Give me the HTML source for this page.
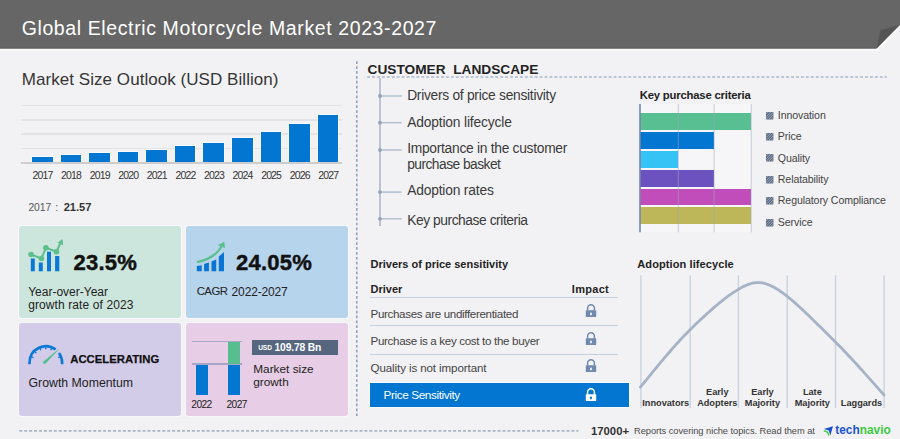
<!DOCTYPE html>
<html><head><meta charset="utf-8"><title>Global Electric Motorcycle Market 2023-2027</title>
<style>
html,body{margin:0;padding:0;}
body{width:900px;height:439px;overflow:hidden;background:#f2f2f4;position:relative;font-family:"Liberation Sans", sans-serif;}
.t{position:absolute;white-space:pre;line-height:1;}
.r{position:absolute;}
.abs{position:absolute;overflow:visible;}
</style></head><body>
<svg class="abs" width="900" height="60" style="left:0;top:0">
<polygon points="0,48.5 876.5,48.5 900,25 900,27.5 878.5,50.8 0,50.8" fill="#fafafb"/>
<polygon points="0,0 900,0 900,25 876.5,48.5 0,48.5" fill="#666666"/>
<rect x="0" y="47.5" width="876" height="1" fill="#5e5e5e"/>
<polygon points="876.5,48.5 880.5,30.3 899,25.3" fill="#555555"/>
</svg><div class="t" style="left:21.70px;top:18.89px;font-size:19.5px;color:#ffffff;letter-spacing:0.61px;">Global Electric Motorcycle Market 2023-2027</div>
<div class="t" style="left:21.80px;top:71.01px;font-size:17px;color:#353535;letter-spacing:0.05px;">Market Size Outlook (USD Billion)</div>
<div class="r" style="left:21.00px;top:104.70px;width:321.00px;height:1.60px;background:#e3e3e5;"></div>
<div class="r" style="left:21.00px;top:119.10px;width:321.00px;height:1.60px;background:#e3e3e5;"></div>
<div class="r" style="left:21.00px;top:133.30px;width:321.00px;height:1.60px;background:#e3e3e5;"></div>
<div class="r" style="left:21.00px;top:147.70px;width:321.00px;height:1.60px;background:#e3e3e5;"></div>
<div class="r" style="left:32.00px;top:156.70px;width:20.60px;height:5.50px;background:#0276d0;box-shadow:0 0 0 0.8px rgba(255,255,255,0.75);"></div>
<div class="t" style="left:-57.50px;width:200px;text-align:center;top:170.11px;font-size:10.5px;color:#333333;letter-spacing:-0.85px;">2017</div>
<div class="r" style="left:60.58px;top:155.00px;width:20.60px;height:7.20px;background:#0276d0;box-shadow:0 0 0 0.8px rgba(255,255,255,0.75);"></div>
<div class="t" style="left:-28.92px;width:200px;text-align:center;top:170.11px;font-size:10.5px;color:#333333;letter-spacing:-0.85px;">2018</div>
<div class="r" style="left:89.16px;top:153.30px;width:20.60px;height:8.90px;background:#0276d0;box-shadow:0 0 0 0.8px rgba(255,255,255,0.75);"></div>
<div class="t" style="left:-0.34px;width:200px;text-align:center;top:170.11px;font-size:10.5px;color:#333333;letter-spacing:-0.85px;">2019</div>
<div class="r" style="left:117.74px;top:152.00px;width:20.60px;height:10.20px;background:#0276d0;box-shadow:0 0 0 0.8px rgba(255,255,255,0.75);"></div>
<div class="t" style="left:28.24px;width:200px;text-align:center;top:170.11px;font-size:10.5px;color:#333333;letter-spacing:-0.85px;">2020</div>
<div class="r" style="left:146.32px;top:149.80px;width:20.60px;height:12.40px;background:#0276d0;box-shadow:0 0 0 0.8px rgba(255,255,255,0.75);"></div>
<div class="t" style="left:56.82px;width:200px;text-align:center;top:170.11px;font-size:10.5px;color:#333333;letter-spacing:-0.85px;">2021</div>
<div class="r" style="left:174.90px;top:146.40px;width:20.60px;height:15.80px;background:#0276d0;box-shadow:0 0 0 0.8px rgba(255,255,255,0.75);"></div>
<div class="t" style="left:85.40px;width:200px;text-align:center;top:170.11px;font-size:10.5px;color:#333333;letter-spacing:-0.85px;">2022</div>
<div class="r" style="left:203.48px;top:142.80px;width:20.60px;height:19.40px;background:#0276d0;box-shadow:0 0 0 0.8px rgba(255,255,255,0.75);"></div>
<div class="t" style="left:113.98px;width:200px;text-align:center;top:170.11px;font-size:10.5px;color:#333333;letter-spacing:-0.85px;">2023</div>
<div class="r" style="left:232.06px;top:137.90px;width:20.60px;height:24.30px;background:#0276d0;box-shadow:0 0 0 0.8px rgba(255,255,255,0.75);"></div>
<div class="t" style="left:142.56px;width:200px;text-align:center;top:170.11px;font-size:10.5px;color:#333333;letter-spacing:-0.85px;">2024</div>
<div class="r" style="left:260.64px;top:131.80px;width:20.60px;height:30.40px;background:#0276d0;box-shadow:0 0 0 0.8px rgba(255,255,255,0.75);"></div>
<div class="t" style="left:171.14px;width:200px;text-align:center;top:170.11px;font-size:10.5px;color:#333333;letter-spacing:-0.85px;">2025</div>
<div class="r" style="left:289.22px;top:124.40px;width:20.60px;height:37.80px;background:#0276d0;box-shadow:0 0 0 0.8px rgba(255,255,255,0.75);"></div>
<div class="t" style="left:199.72px;width:200px;text-align:center;top:170.11px;font-size:10.5px;color:#333333;letter-spacing:-0.85px;">2026</div>
<div class="r" style="left:317.80px;top:115.00px;width:20.60px;height:47.20px;background:#0276d0;box-shadow:0 0 0 0.8px rgba(255,255,255,0.75);"></div>
<div class="t" style="left:228.30px;width:200px;text-align:center;top:170.11px;font-size:10.5px;color:#333333;letter-spacing:-0.85px;">2027</div>
<div class="r" style="left:21.00px;top:161.90px;width:321.00px;height:1.80px;background:#cdcdcf;"></div>
<div class="t" style="left:28.40px;top:202.58px;font-size:10.3px;color:#555555;">2017</div>
<div class="t" style="left:55.20px;top:202.41px;font-size:10.5px;color:#555555;">:</div>
<div class="t" style="left:63.70px;top:201.90px;font-size:11.1px;color:#333333;font-weight:700;">21.57</div>
<div class="r" style="left:19.00px;top:226.00px;width:162.00px;height:92.30px;background:#cde6dd;border-radius:3px;box-shadow:0 0 0 1px #f8f8fa;"></div>
<div class="r" style="left:186.00px;top:226.00px;width:162.00px;height:92.30px;background:#b6d4ec;border-radius:3px;box-shadow:0 0 0 1px #f8f8fa;"></div>
<div class="r" style="left:19.00px;top:323.00px;width:162.00px;height:92.80px;background:#d3cce8;border-radius:3px;box-shadow:0 0 0 1px #f8f8fa;"></div>
<div class="r" style="left:186.00px;top:323.00px;width:162.00px;height:92.80px;background:#e7cde5;border-radius:3px;box-shadow:0 0 0 1px #f8f8fa;"></div>
<svg class="abs" width="60" height="50" style="left:20px;top:230px" viewBox="20 230 60 50">
<g fill="#0a78d7">
<rect x="30.8" y="258.5" width="4" height="12.8"/>
<rect x="38.8" y="262.5" width="4" height="8.8"/>
<rect x="47" y="251.7" width="4" height="19.6"/>
<rect x="55.1" y="256" width="4.2" height="15.3"/>
</g>
<g stroke="#5bbf8e" stroke-width="2" fill="none"><polyline points="31.1,254.5 41.4,258.5 45.9,247.7 56.5,251.7 60.5,243"/></g>
<g fill="#5bbf8e">
<circle cx="31.1" cy="254.5" r="2.8"/><circle cx="41.4" cy="258.5" r="2.8"/>
<circle cx="45.9" cy="247.7" r="2.8"/><circle cx="56.5" cy="251.7" r="2.8"/>
<polygon points="62.5,239 57.5,242.8 63.2,245.3"/>
</g></svg><div class="t" style="left:73.60px;top:252.38px;font-size:22px;color:#111111;font-weight:700;letter-spacing:0.2px;-webkit-text-stroke:0.45px #111;">23.5%</div>
<div class="t" style="left:28.20px;top:285.84px;font-size:12px;color:#222222;">Year-over-Year</div>
<div class="t" style="left:28.20px;top:299.34px;font-size:12px;color:#222222;letter-spacing:0.1px;">growth rate of 2023</div>
<svg class="abs" width="40" height="40" style="left:192px;top:238px" viewBox="192 238 40 40">
<g fill="#0a74d4">
<polygon points="196.8,265.9 201.7,265.2 201.7,271.3 196.8,271.3"/>
<polygon points="204.1,264 208.9,262.6 208.9,271.3 204.1,271.3"/>
<polygon points="211.5,261.4 216.2,259.6 216.2,271.3 211.5,271.3"/>
<polygon points="218.8,256.6 224,251.9 224,271.3 218.8,271.3"/>
</g>
<path d="M197,262.1 C205,260.5 216,256 221.5,246.5" stroke="#5bbf8e" stroke-width="2.3" fill="none"/>
<polygon points="224.2,241.8 217.8,245.2 225,248" fill="#5bbf8e"/>
</svg><div class="t" style="left:236.10px;top:252.08px;font-size:22px;color:#111111;font-weight:700;letter-spacing:0.2px;-webkit-text-stroke:0.45px #111;">24.05%</div>
<div class="t" style="left:196.70px;top:286.35px;font-size:11.4px;color:#222222;letter-spacing:-0.55px;">CAGR</div>
<div class="t" style="left:231.60px;top:285.84px;font-size:12px;color:#222222;letter-spacing:-0.15px;">2022-2027</div>
<svg class="abs" width="50" height="36" style="left:22px;top:336px" viewBox="22 336 50 36">
<path d="M29.50,364.2 L29.50,362.60 A16.3,16.3 0 0 1 55.61,349.58" stroke="#0a78d7" stroke-width="2.6" fill="none"/>
<path d="M58.99,353.02 A16.3,16.3 0 0 1 62.10,362.60 L62.10,364.2" stroke="#0a78d7" stroke-width="2.6" fill="none"/>
<g stroke="#0a78d7" stroke-width="1.4"><line x1="31.61" y1="356.87" x2="33.38" y2="357.58"/><line x1="34.98" y1="351.78" x2="36.32" y2="353.12"/><line x1="40.07" y1="348.41" x2="40.78" y2="350.18"/><line x1="45.80" y1="347.30" x2="45.80" y2="349.20"/><line x1="51.53" y1="348.41" x2="50.82" y2="350.18"/><line x1="59.99" y1="356.87" x2="58.22" y2="357.58"/></g>
<polygon points="43.64,361.38 45.56,363.42 58.5,349.82 58.1,349.38" fill="#4cc08a"/><circle cx="44.6" cy="362.4" r="1.4" fill="#4cc08a"/>
</svg><div class="t" style="left:70.30px;top:354.13px;font-size:11.3px;color:#111111;font-weight:700;-webkit-text-stroke:0.25px #111;">ACCELERATING</div>
<div class="t" style="left:28.50px;top:376.59px;font-size:12.3px;color:#222222;">Growth Momentum</div>
<div class="r" style="left:191.90px;top:340.70px;width:50.20px;height:1.50px;background:#a8a6c6;"></div>
<div class="r" style="left:191.90px;top:363.00px;width:50.20px;height:1.50px;background:#a8a6c6;"></div>
<div class="r" style="left:196.40px;top:364.50px;width:12.10px;height:30.80px;background:#0276d0;"></div>
<div class="r" style="left:228.10px;top:341.60px;width:12.10px;height:22.00px;background:#56be8f;"></div>
<div class="r" style="left:228.10px;top:364.50px;width:12.10px;height:30.80px;background:#0276d0;"></div>
<div class="t" style="left:101.50px;width:200px;text-align:center;top:400.17px;font-size:10.2px;color:#222222;letter-spacing:-0.6px;">2022</div>
<div class="t" style="left:136.70px;width:200px;text-align:center;top:400.17px;font-size:10.2px;color:#222222;letter-spacing:-0.6px;">2027</div>
<div class="r" style="left:252.10px;top:339.90px;width:85.90px;height:14.80px;background:#56667e;"></div>
<div class="t" style="left:258.20px;top:345.31px;font-size:6.6px;color:#ffffff;font-weight:700;letter-spacing:-0.1px;">USD</div>
<div class="t" style="left:274.50px;top:342.78px;font-size:10.3px;color:#ffffff;font-weight:700;letter-spacing:-0.15px;">109.78 Bn</div>
<div class="t" style="left:253.30px;top:363.71px;font-size:11.8px;color:#222222;">Market size</div>
<div class="t" style="left:253.30px;top:377.01px;font-size:11.8px;color:#222222;">growth</div>
<svg class="abs" width="900" height="439" style="left:0;top:0">
<line x1="356.8" y1="61.3" x2="356.8" y2="416.5" stroke="#8c9dbc" stroke-width="1.5" stroke-dasharray="2.7 2.19"/>
<line x1="19.3" y1="430.9" x2="578.4" y2="430.9" stroke="#abb5c4" stroke-width="1.8" stroke-dasharray="3 1.93"/>
<line x1="367.1" y1="77" x2="887" y2="77" stroke="#abb8cc" stroke-width="1.7" stroke-dasharray="2.9 2.03"/>
</svg><div class="t" style="left:591.00px;top:426.23px;font-size:11.3px;color:#333333;font-weight:700;">17000+</div>
<div class="t" style="left:634.00px;top:427.03px;font-size:9.3px;color:#4a4a4a;letter-spacing:-0.05px;">Reports covering niche topics. Read them at</div>
<svg class="abs" width="12" height="12" style="left:823px;top:424.5px" viewBox="0 0 12 12">
<polygon points="0.9,3.9 10,1.2 7.4,10.2 5.7,5.4" fill="#1a4fd0"/>
<path d="M1.3,5.9 Q5.3,6.3 5.7,10" stroke="#3cd23c" stroke-width="1.5" fill="none" stroke-linecap="round"/>
</svg><div class="t" style="left:835.30px;top:424.83px;font-size:11.9px;color:#1a55d2;font-weight:700;">tech</div>
<div class="t" style="left:859.70px;top:424.83px;font-size:11.9px;color:#3ccb3c;font-weight:700;">navio</div>
<div class="t" style="left:367.50px;top:62.90px;font-size:13.7px;color:#222222;font-weight:700;">CUSTOMER&nbsp; LANDSCAPE</div>
<svg class="abs" width="900" height="439" style="left:0;top:0"><g stroke="#b3bfd1"><line x1="380" y1="78" x2="380" y2="226" stroke-width="1.8"/><line x1="380" y1="96.0" x2="401.7" y2="96.0" stroke-width="1.5"/><line x1="380" y1="122.7" x2="401.7" y2="122.7" stroke-width="1.5"/><line x1="380" y1="150.0" x2="401.7" y2="150.0" stroke-width="1.5"/><line x1="380" y1="192.1" x2="401.7" y2="192.1" stroke-width="1.5"/><line x1="380" y1="218.8" x2="401.7" y2="218.8" stroke-width="1.5"/></g><g fill="#94a3bb"><circle cx="380" cy="96.0" r="1.9"/><circle cx="380" cy="122.7" r="1.9"/><circle cx="380" cy="150.0" r="1.9"/><circle cx="380" cy="192.1" r="1.9"/><circle cx="380" cy="218.8" r="1.9"/></g></svg><div class="t" style="left:407.20px;top:88.72px;font-size:13.8px;color:#3a3a3a;letter-spacing:-0.28px;">Drivers of price sensitivity</div>
<div class="t" style="left:407.20px;top:115.52px;font-size:13.8px;color:#3a3a3a;letter-spacing:-0.16px;">Adoption lifecycle</div>
<div class="t" style="left:407.20px;top:141.92px;font-size:13.8px;color:#3a3a3a;letter-spacing:-0.28px;">Importance in the customer</div>
<div class="t" style="left:407.20px;top:158.12px;font-size:13.8px;color:#3a3a3a;letter-spacing:-0.54px;">purchase basket</div>
<div class="t" style="left:407.20px;top:183.72px;font-size:13.8px;color:#3a3a3a;letter-spacing:-0.18px;">Adoption rates</div>
<div class="t" style="left:407.20px;top:213.62px;font-size:13.8px;color:#3a3a3a;letter-spacing:-0.44px;">Key purchase criteria</div>
<div class="t" style="left:639.80px;top:89.53px;font-size:11.3px;color:#222222;font-weight:700;letter-spacing:-0.2px;">Key purchase criteria</div>
<div class="r" style="left:640.00px;top:104.00px;width:111.00px;height:128.00px;background:#f6f6f8;"></div>
<div class="r" style="left:640.00px;top:113.40px;width:111.20px;height:16.80px;background:#58bf93;"></div>
<div class="r" style="left:640.00px;top:132.18px;width:74.10px;height:16.80px;background:#0276d0;"></div>
<div class="r" style="left:640.00px;top:150.96px;width:38.30px;height:16.80px;background:#35c3f5;"></div>
<div class="r" style="left:640.00px;top:169.74px;width:74.10px;height:16.80px;background:#6b52be;"></div>
<div class="r" style="left:640.00px;top:188.52px;width:111.20px;height:16.80px;background:#c04db9;"></div>
<div class="r" style="left:640.00px;top:207.30px;width:111.20px;height:16.80px;background:#bdb759;"></div>
<svg class="abs" width="900" height="439" style="left:0;top:0"><line x1="678.3" y1="104" x2="678.3" y2="232.3" stroke="#9aa8bf" stroke-opacity="0.55" stroke-width="1"/><line x1="714.1" y1="104" x2="714.1" y2="232.3" stroke="#9aa8bf" stroke-opacity="0.55" stroke-width="1"/><line x1="751.2" y1="104" x2="751.2" y2="232.3" stroke="#9aa8bf" stroke-opacity="0.55" stroke-width="1"/><line x1="640" y1="104" x2="640" y2="232.3" stroke="#7486a8" stroke-width="1.6"/></svg><svg class="abs" width="8" height="8" style="left:765.8px;top:111.60px" viewBox="0 0 8 8"><rect width="7.4" height="7.4" rx="0.6" fill="#5f6d84"/><path d="M0,2.2 L2.2,0 M0,4.8 L4.8,0 M0,7.4 L7.4,0 M2.6,7.4 L7.4,2.6 M5.2,7.4 L7.4,5.2" stroke="#aab6c8" stroke-width="0.75"/></svg><div class="t" style="left:777.80px;top:109.93px;font-size:10.6px;color:#444444;letter-spacing:-0.1px;">Innovation</div>
<svg class="abs" width="8" height="8" style="left:765.8px;top:133.00px" viewBox="0 0 8 8"><rect width="7.4" height="7.4" rx="0.6" fill="#5f6d84"/><path d="M0,2.2 L2.2,0 M0,4.8 L4.8,0 M0,7.4 L7.4,0 M2.6,7.4 L7.4,2.6 M5.2,7.4 L7.4,5.2" stroke="#aab6c8" stroke-width="0.75"/></svg><div class="t" style="left:777.80px;top:131.33px;font-size:10.6px;color:#444444;letter-spacing:-0.1px;">Price</div>
<svg class="abs" width="8" height="8" style="left:765.8px;top:154.30px" viewBox="0 0 8 8"><rect width="7.4" height="7.4" rx="0.6" fill="#5f6d84"/><path d="M0,2.2 L2.2,0 M0,4.8 L4.8,0 M0,7.4 L7.4,0 M2.6,7.4 L7.4,2.6 M5.2,7.4 L7.4,5.2" stroke="#aab6c8" stroke-width="0.75"/></svg><div class="t" style="left:777.80px;top:152.63px;font-size:10.6px;color:#444444;letter-spacing:-0.1px;">Quality</div>
<svg class="abs" width="8" height="8" style="left:765.8px;top:175.50px" viewBox="0 0 8 8"><rect width="7.4" height="7.4" rx="0.6" fill="#5f6d84"/><path d="M0,2.2 L2.2,0 M0,4.8 L4.8,0 M0,7.4 L7.4,0 M2.6,7.4 L7.4,2.6 M5.2,7.4 L7.4,5.2" stroke="#aab6c8" stroke-width="0.75"/></svg><div class="t" style="left:777.80px;top:173.83px;font-size:10.6px;color:#444444;letter-spacing:-0.1px;">Relatability</div>
<svg class="abs" width="8" height="8" style="left:765.8px;top:196.70px" viewBox="0 0 8 8"><rect width="7.4" height="7.4" rx="0.6" fill="#5f6d84"/><path d="M0,2.2 L2.2,0 M0,4.8 L4.8,0 M0,7.4 L7.4,0 M2.6,7.4 L7.4,2.6 M5.2,7.4 L7.4,5.2" stroke="#aab6c8" stroke-width="0.75"/></svg><div class="t" style="left:777.80px;top:195.03px;font-size:10.6px;color:#444444;letter-spacing:-0.1px;">Regulatory Compliance</div>
<svg class="abs" width="8" height="8" style="left:765.8px;top:218.80px" viewBox="0 0 8 8"><rect width="7.4" height="7.4" rx="0.6" fill="#5f6d84"/><path d="M0,2.2 L2.2,0 M0,4.8 L4.8,0 M0,7.4 L7.4,0 M2.6,7.4 L7.4,2.6 M5.2,7.4 L7.4,5.2" stroke="#aab6c8" stroke-width="0.75"/></svg><div class="t" style="left:777.80px;top:217.13px;font-size:10.6px;color:#444444;letter-spacing:-0.1px;">Service</div>
<div class="t" style="left:370.50px;top:259.09px;font-size:11px;color:#222222;font-weight:700;">Drivers of price sensitivity</div>
<div class="t" style="left:370.50px;top:284.49px;font-size:11px;color:#222222;font-weight:700;">Driver</div>
<div class="t" style="left:571.80px;top:284.49px;font-size:11px;color:#222222;font-weight:700;letter-spacing:0.3px;">Impact</div>
<div class="r" style="left:370.00px;top:296.70px;width:248.00px;height:1.30px;background:#c5d0de;"></div>
<div class="r" style="left:370.00px;top:324.70px;width:248.00px;height:1.30px;background:#c5d0de;"></div>
<div class="r" style="left:370.00px;top:353.70px;width:248.00px;height:1.30px;background:#c5d0de;"></div>
<div class="t" style="left:370.50px;top:307.68px;font-size:11.6px;color:#444444;letter-spacing:-0.34px;">Purchases are undifferentiated</div>
<div class="t" style="left:370.50px;top:335.08px;font-size:11.6px;color:#444444;letter-spacing:-0.33px;">Purchase is a key cost to the buyer</div>
<div class="t" style="left:370.50px;top:362.28px;font-size:11.6px;color:#444444;letter-spacing:-0.11px;">Quality is not important</div>
<svg class="abs" width="14" height="16" style="left:584.10px;top:302.80px" viewBox="0 0 14 16"><path d="M3.6,7.6 V5.15 A3.4,3.4 0 0 1 10.4,5.15 V7.6" stroke="#7189ad" stroke-width="1.5" fill="none"/><rect x="1.8" y="7.2" width="10.4" height="6.8" rx="0.4" fill="#7189ad"/><rect x="6.1" y="9.4" width="1.8" height="3" rx="0.8" fill="#f2f2f4"/></svg><svg class="abs" width="14" height="16" style="left:584.10px;top:330.90px" viewBox="0 0 14 16"><path d="M3.6,7.6 V5.15 A3.4,3.4 0 0 1 10.4,5.15 V7.6" stroke="#7189ad" stroke-width="1.5" fill="none"/><rect x="1.8" y="7.2" width="10.4" height="6.8" rx="0.4" fill="#7189ad"/><rect x="6.1" y="9.4" width="1.8" height="3" rx="0.8" fill="#f2f2f4"/></svg><svg class="abs" width="14" height="16" style="left:584.10px;top:358.00px" viewBox="0 0 14 16"><path d="M3.6,7.6 V5.15 A3.4,3.4 0 0 1 10.4,5.15 V7.6" stroke="#7189ad" stroke-width="1.5" fill="none"/><rect x="1.8" y="7.2" width="10.4" height="6.8" rx="0.4" fill="#7189ad"/><rect x="6.1" y="9.4" width="1.8" height="3" rx="0.8" fill="#f2f2f4"/></svg><div class="r" style="left:370.00px;top:382.70px;width:259.00px;height:24.20px;background:#0276d0;box-shadow:0 0 0 1px #fbfbfc;"></div>
<div class="t" style="left:383.60px;top:390.31px;font-size:11.8px;color:#ffffff;letter-spacing:-0.42px;">Price Sensitivity</div>
<svg class="abs" width="14" height="16" style="left:584.10px;top:386.80px" viewBox="0 0 14 16"><path d="M3.6,7.6 V5.15 A3.4,3.4 0 0 1 10.4,5.15 V7.6" stroke="#ffffff" stroke-width="1.5" fill="none"/><rect x="1.8" y="7.2" width="10.4" height="6.8" rx="0.4" fill="#ffffff"/><rect x="6.1" y="9.4" width="1.8" height="3" rx="0.8" fill="#0276d0"/></svg><div class="t" style="left:637.30px;top:259.09px;font-size:11px;color:#222222;font-weight:700;letter-spacing:0.1px;">Adoption lifecycle</div>
<svg class="abs" width="900" height="439" style="left:0;top:0"><line x1="640.9" y1="275.5" x2="640.9" y2="408" stroke="#c9d2df" stroke-width="1.4"/><line x1="690.2" y1="275.5" x2="690.2" y2="408" stroke="#c9d2df" stroke-width="1.4"/><line x1="738.4" y1="275.5" x2="738.4" y2="408" stroke="#c9d2df" stroke-width="1.4"/><line x1="787.2" y1="275.5" x2="787.2" y2="408" stroke="#c9d2df" stroke-width="1.4"/><line x1="835.5" y1="275.5" x2="835.5" y2="408" stroke="#c9d2df" stroke-width="1.4"/><line x1="884.1" y1="275.5" x2="884.1" y2="408" stroke="#c9d2df" stroke-width="1.4"/><path d="M640.4,387.20 L642.4,384.73 L644.4,382.25 L646.4,379.78 L648.4,377.32 L650.4,374.86 L652.4,372.41 L654.4,369.97 L656.4,367.54 L658.4,365.12 L660.4,362.71 L662.4,360.33 L664.4,357.96 L666.4,355.60 L668.4,353.27 L670.4,350.96 L672.4,348.67 L674.4,346.41 L676.4,344.18 L678.4,341.97 L680.4,339.79 L682.4,337.64 L684.4,335.53 L686.4,333.45 L688.4,331.41 L690.4,329.40 L692.4,327.43 L694.4,325.50 L696.4,323.59 L698.4,321.70 L700.4,319.83 L702.4,317.97 L704.4,316.12 L706.4,314.29 L708.4,312.48 L710.4,310.69 L712.4,308.92 L714.4,307.18 L716.4,305.48 L718.4,303.80 L720.4,302.16 L722.4,300.55 L724.4,298.98 L726.4,297.46 L728.4,295.98 L730.4,294.55 L732.4,293.16 L734.4,291.83 L736.4,290.56 L738.4,289.34 L740.4,288.18 L742.4,287.10 L744.4,286.10 L746.4,285.21 L748.4,284.42 L750.4,283.75 L752.4,283.22 L754.4,282.84 L756.4,282.62 L758.4,282.57 L760.4,282.69 L762.4,282.96 L764.4,283.39 L766.4,283.96 L768.4,284.67 L770.4,285.50 L772.4,286.45 L774.4,287.52 L776.4,288.68 L778.4,289.93 L780.4,291.27 L782.4,292.69 L784.4,294.18 L786.4,295.73 L788.4,297.32 L790.4,298.97 L792.4,300.66 L794.4,302.39 L796.4,304.16 L798.4,305.96 L800.4,307.79 L802.4,309.65 L804.4,311.54 L806.4,313.44 L808.4,315.36 L810.4,317.30 L812.4,319.25 L814.4,321.21 L816.4,323.17 L818.4,325.13 L820.4,327.09 L822.4,329.05 L824.4,331.01 L826.4,332.96 L828.4,334.93 L830.4,336.90 L832.4,338.89 L834.4,340.89 L836.4,342.91 L838.4,344.95 L840.4,347.01 L842.4,349.09 L844.4,351.18 L846.4,353.29 L848.4,355.42 L850.4,357.56 L852.4,359.72 L854.4,361.89 L856.4,364.07 L858.4,366.26 L860.4,368.47 L862.4,370.68 L864.4,372.91 L866.4,375.14 L868.4,377.38 L870.4,379.62 L872.4,381.87 L874.4,384.13 L876.4,386.39 L878.4,388.65 L880.4,390.92 L882.4,393.19 L884,395" stroke="#a6b3c7" stroke-width="2.8" fill="none" stroke-linecap="round" stroke-linejoin="round"/></svg><div class="t" style="left:565.75px;width:200px;text-align:center;top:399.21px;font-size:9.2px;color:#333333;font-weight:700;">Innovators</div>
<div class="t" style="left:617.30px;width:200px;text-align:center;top:388.01px;font-size:9.2px;color:#333333;font-weight:700;">Early</div>
<div class="t" style="left:617.30px;width:200px;text-align:center;top:399.21px;font-size:9.2px;color:#333333;font-weight:700;">Adopters</div>
<div class="t" style="left:662.40px;width:200px;text-align:center;top:388.01px;font-size:9.2px;color:#333333;font-weight:700;">Early</div>
<div class="t" style="left:662.40px;width:200px;text-align:center;top:399.21px;font-size:9.2px;color:#333333;font-weight:700;">Majority</div>
<div class="t" style="left:712.35px;width:200px;text-align:center;top:388.01px;font-size:9.2px;color:#333333;font-weight:700;">Late</div>
<div class="t" style="left:712.35px;width:200px;text-align:center;top:399.21px;font-size:9.2px;color:#333333;font-weight:700;">Majority</div>
<div class="t" style="left:761.50px;width:200px;text-align:center;top:399.21px;font-size:9.2px;color:#333333;font-weight:700;">Laggards</div>

</body></html>
